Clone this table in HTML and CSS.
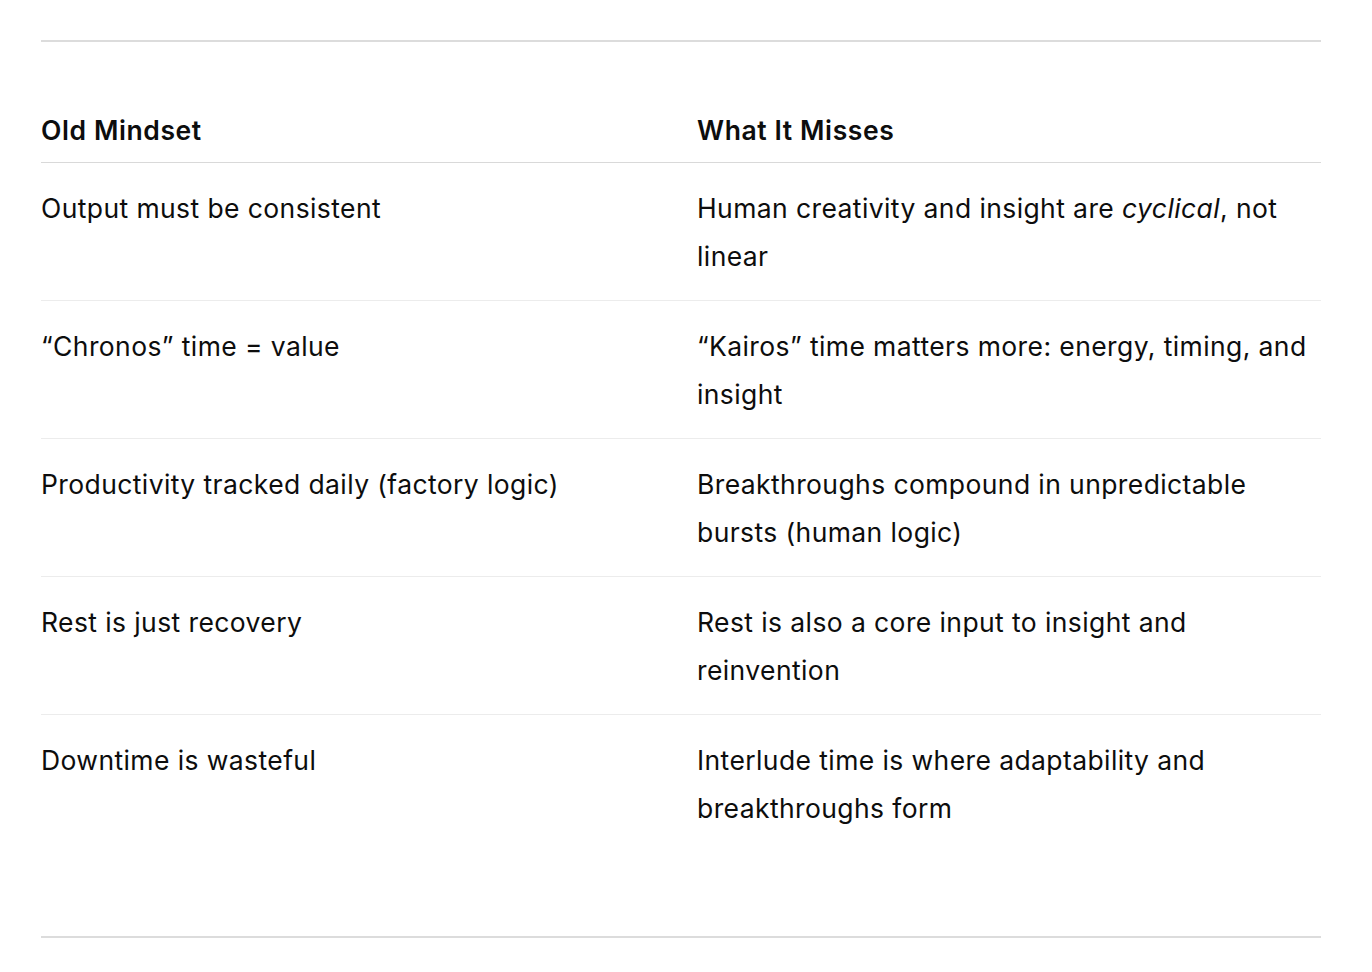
FILE: index.html
```html
<!DOCTYPE html>
<html lang="en">
<head>
<meta charset="utf-8">
<title>Old Mindset vs What It Misses</title>
<link rel="stylesheet" href="styles.css">
</head>
<body>
<main class="page">
  <hr class="rule">
  <div class="table">
    <div class="row head">
      <div class="cell">Old Mindset</div>
      <div class="cell">What It Misses</div>
    </div>
    <div class="row">
      <div class="cell">Output must be consistent</div>
      <div class="cell">Human creativity and insight are <em>cyclical</em>, not linear</div>
    </div>
    <div class="row">
      <div class="cell">“Chronos” time = value</div>
      <div class="cell">“Kairos” time matters more: energy, timing, and insight</div>
    </div>
    <div class="row">
      <div class="cell">Productivity tracked daily (factory logic)</div>
      <div class="cell">Breakthroughs compound in unpredictable bursts (human logic)</div>
    </div>
    <div class="row">
      <div class="cell">Rest is just recovery</div>
      <div class="cell">Rest is also a core input to insight and reinvention</div>
    </div>
    <div class="row last">
      <div class="cell">Downtime is wasteful</div>
      <div class="cell">Interlude time is where adaptability and breakthroughs form</div>
    </div>
  </div>
  <hr class="rule bottom">
</main>
</body>
</html>
```

FILE: styles.css
```css
html, body {
  margin: 0;
  padding: 0;
  background: #ffffff;
}
body {
  font-family: Inter, "Noto Sans", sans-serif;
  color: #0d0d0d;
  font-size: 26.5px;
  letter-spacing: 0.4px;
  line-height: 48px;
}
.page {
  padding: 40px 51px 0 41px;
}
.rule {
  margin: 0;
  border: 0;
  border-top: 2px solid #dcdcdc;
  height: 0;
}
.table {
  margin-top: 64px;
}
.row {
  display: grid;
  grid-template-columns: 656px 1fr;
  padding: 21px 0 20px;
  border-bottom: 1px solid #ececec;
}
.row.head {
  font-weight: 600;
  letter-spacing: 0.6px;
  padding: 0 0 8px;
  border-bottom: 1px solid #d9d9d9;
}
.row.last {
  border-bottom: 0;
}
.cell em {
  font-style: italic;
}
.rule.bottom {
  margin-top: 84px;
}
```
